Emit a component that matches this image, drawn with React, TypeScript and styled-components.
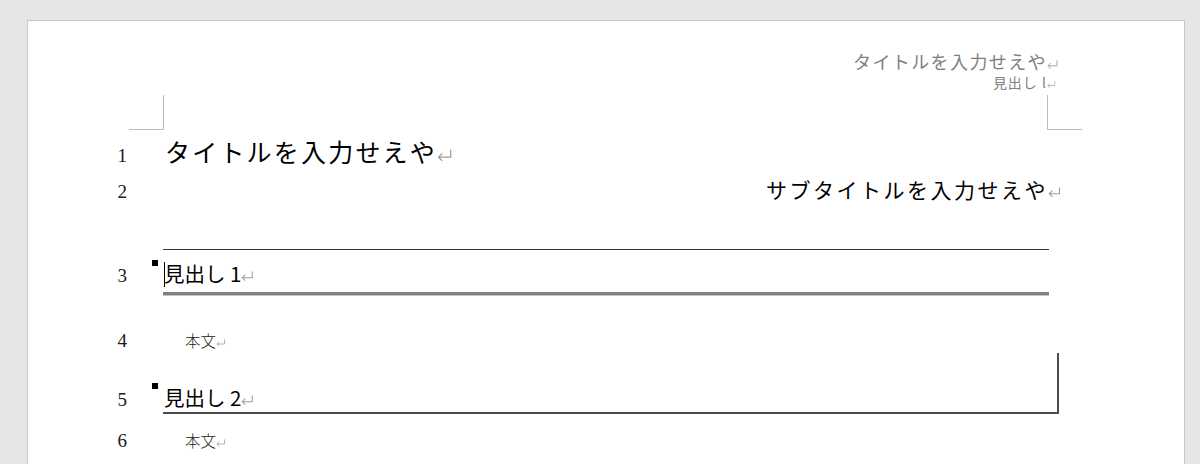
import * as React from 'react'
import styled, { createGlobalStyle } from 'styled-components'

const GlobalStyle = createGlobalStyle`
  html, body {
    margin: 0;
    padding: 0;
    background: #e6e6e6;
    overflow: hidden;
  }
`

const gothic = `"Noto Sans CJK JP", "Noto Sans", sans-serif`

const Page = styled.div`
  box-sizing: border-box;
  margin: 20px 0 0 27px;
  width: 1158px;
  height: 460px;
  background: #fff;
  border: 1px solid #c8c8c8;
  border-bottom: none;
`

const Header = styled.header`
  display: grid;
  grid-template-columns: 135px 884px 35px;
  padding-top: 29px;
`

const HeaderText = styled.div`
  grid-column: 2;
  text-align: right;
  font-family: ${gothic};
  color: #7f7f7f;
`

const HeaderTitle = styled.div`
  font-size: 18px;
  line-height: 22px;
  letter-spacing: 1.4px;
`

const HeaderLabel = styled.div`
  font-size: 14px;
  line-height: 20px;
  letter-spacing: 1px;
`

const Corner = styled.div<{ $side: 'left' | 'right' }>`
  box-sizing: border-box;
  width: 35px;
  height: 35px;
  margin-top: 3px;
  border-bottom: 1px solid #bdbdbd;
  ${(p) =>
    p.$side === 'left'
      ? `grid-column: 1; justify-self: end; margin-right: -1px; border-right: 1px solid #bdbdbd;`
      : `grid-column: 3; border-left: 1px solid #bdbdbd;`}
`

const Line = styled.div<{ $gap: number }>`
  display: grid;
  grid-template-columns: 135px 885px;
  align-items: baseline;
  margin-top: ${(p) => p.$gap}px;
`

const Num = styled.div`
  text-align: right;
  padding-right: 36px;
  font-family: "Liberation Serif", serif;
  font-size: 19px;
  line-height: 24px;
  color: #1a1a1a;
`

// Word's paragraph mark (the little return arrow after every paragraph)
const MarkSvg = styled.svg<{ $hang?: boolean }>`
  width: 0.6em;
  height: 0.5em;
  margin-left: 0;
  vertical-align: 0.02em;
  overflow: visible;
  ${(p) => (p.$hang ? 'margin-right: -0.6em;' : '')}
`

const Mark: React.FC<{ hang?: boolean }> = ({ hang }) => (
  <MarkSvg $hang={hang} viewBox="0 0 12 10" fill="none" stroke="#9c9c9c" strokeWidth={1}>
    <path d="M11 0.5 V6.5 H1.2 M4.2 3.5 L1.2 6.5 L4.2 9.5" />
  </MarkSvg>
)

const Title = styled.div`
  font-family: ${gothic};
  font-size: 25px;
  line-height: 32px;
  letter-spacing: 2.2px;
  color: #000;
  padding-left: 2px;
`

const Subtitle = styled.div`
  font-family: ${gothic};
  font-size: 21px;
  line-height: 28px;
  letter-spacing: 2.5px;
  color: #000;
  text-align: right;
`

const Heading = styled.div<{ $level: 1 | 2 }>`
  position: relative;
  font-family: ${gothic};
  font-size: 20.5px;
  color: #000;
  padding-left: 1px;
  line-height: 28px;
  ${(p) =>
    p.$level === 1
      ? `
    width: 885px;
    padding-top: 9px;
    padding-bottom: 5px;
    border-top: 1px solid #333;
    border-bottom: 3px solid #808080;
    box-shadow: 0 1px 0 #c4c4c4;
  `
      : `
    width: 893px;
    padding-top: 30px;
    padding-bottom: 1px;
    border-right: 2px solid #4d4d4d;
    border-bottom: 2px solid #4d4d4d;
  `}

  &::before {
    content: '';
    position: absolute;
    left: -11px;
    top: ${(p) => (p.$level === 1 ? 10 : 30)}px;
    width: 6px;
    height: 6px;
    background: #000;
  }
`

const Caret = styled.span`
  display: inline-block;
  width: 0;
  height: 25px;
  margin-right: -1px;
  border-left: 1px solid #000;
  vertical-align: -5px;
`

const Body = styled.div`
  font-family: ${gothic};
  font-weight: 300;
  font-size: 15.5px;
  line-height: 22px;
  color: #222;
  padding-left: 22px;
`

export default function App() {
  return (
    <>
      <GlobalStyle />
      <Page>
        <Header>
          <HeaderText>
            <HeaderTitle>
              タイトルを入力せえや<Mark hang />
            </HeaderTitle>
            <HeaderLabel>
              見出し l<Mark hang />
            </HeaderLabel>
          </HeaderText>
          <Corner $side="left" />
          <Corner $side="right" />
        </Header>

        <Line $gap={5}>
          <Num>1</Num>
          <Title>
            タイトルを入力せえや<Mark />
          </Title>
        </Line>

        <Line $gap={7}>
          <Num>2</Num>
          <Subtitle>
            サブタイトルを入力せえや<Mark hang />
          </Subtitle>
        </Line>

        <Line $gap={45}>
          <Num>3</Num>
          <Heading $level={1}>
            <Caret />
            見出し 1<Mark />
          </Heading>
        </Line>

        <Line $gap={34}>
          <Num>4</Num>
          <Body>
            本文<Mark />
          </Body>
        </Line>

        <Line $gap={0}>
          <Num>5</Num>
          <Heading $level={2}>
            見出し 2<Mark />
          </Heading>
        </Line>

        <Line $gap={15}>
          <Num>6</Num>
          <Body>
            本文<Mark />
          </Body>
        </Line>
      </Page>
    </>
  )
}
